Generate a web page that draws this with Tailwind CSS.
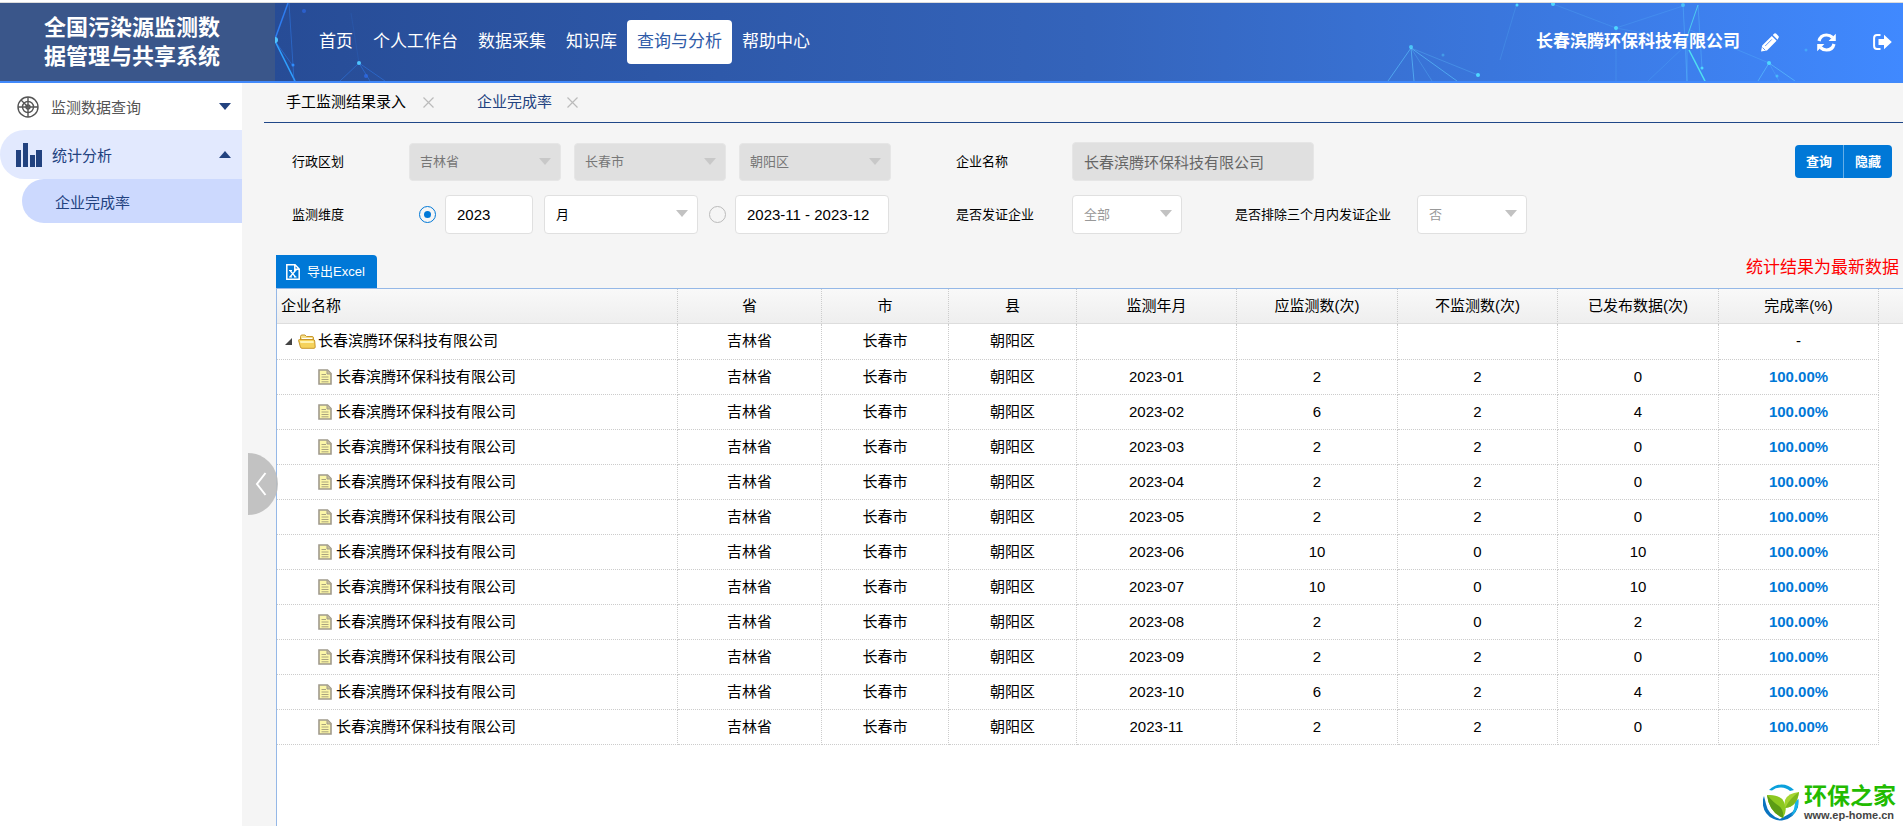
<!DOCTYPE html>
<html lang="zh-CN">

<head>
    <meta charset="utf-8" />
    <meta content="width=device-width, initial-scale=1.0" name="viewport" />
    <title>全国污染源监测数据管理与共享系统</title>
    <script src="https://cdn.jsdelivr.net/npm/@tailwindcss/browser@4"></script>
    <style>
        body {
            font-family: "Liberation Sans", "Noto Sans CJK SC", sans-serif;
        }
    </style>
</head>

<body class="bg-white text-black text-[15px]">
    <div class="relative min-h-screen flex flex-col overflow-hidden">
        <!-- Header -->
        <header class="mt-[2px] border-t border-t-[#dcdcdc] border-b-2 border-b-[#4189fb] flex h-[81px] shrink-0 text-white">
            <h1 class="w-[275px] shrink-0 bg-[#3a568a] px-[44px] pt-[10px] text-[22px] leading-[29px] font-bold">
                全国污染源监测数据管理与共享系统
            </h1>
            <div class="relative flex-1 flex items-center bg-linear-to-r from-[#274c96] via-[#3464bb] to-[#4089ff]">
                <svg class="absolute left-0 top-0" width="130" height="78" viewBox="0 0 130 78" fill="none">
                    <g stroke="#2f7df0">
                        <path d="M13 0L0 36" stroke-width="1.5" />
                        <path d="M0 38L20 78" stroke="#2fa0ff" stroke-width="1.5" />
                        <path d="M14 0L19 78M0 38L18 63" opacity=".5" />
                        <path d="M84 60L65 78M84 60L110 78M84 60L95 78" opacity=".5" />
                        <path d="M84 60L76 10" opacity=".15" />
                    </g>
                    <circle cx="0" cy="37" r="3" fill="#4fc4ff" />
                    <circle cx="84" cy="60" r="2" fill="#4fc4ff" />
                    <circle cx="18" cy="62" r="1.5" fill="#2f8dff" />
                    <circle cx="29" cy="8" r="2" fill="#2f6df0" opacity=".6" />
                    <circle cx="91" cy="73" r="2" fill="#2f6df0" opacity=".7" />
                </svg>
                <svg class="absolute right-0 top-0" width="523" height="78" viewBox="1380 3 523 78" fill="none">
                    <g stroke="#5fc8ff">
                        <path d="M1411 48L1388 81M1411 48L1414 81M1411 48L1457 81" opacity=".6" />
                        <path d="M1411 48L1432 81M1411 48L1478 75" opacity=".3" />
                        <path d="M1616 28L1553 4M1616 28L1683 6M1616 28V81M1616 28L1690 42M1686 45L1648 81M1517 3L1500 60" opacity=".2" />
                        <path d="M1698 5L1686 40" stroke="#4fe0f0" opacity=".8" />
                        <path d="M1698 5L1702 68M1687 40V81M1683 4L1687 81" opacity=".35" />
                        <path d="M1689 50L1705 81" stroke="#4fe0f0" stroke-width="1.5" />
                        <path d="M1769 63L1758 81M1769 63L1795 81" opacity=".6" />
                        <path d="M1769 63L1779 81M1769 63L1690 30" opacity=".25" />
                    </g>
                    <g fill="#4fd8ff">
                        <circle cx="1411" cy="47" r="2" opacity=".8" />
                        <circle cx="1478" cy="75" r="2" />
                        <circle cx="1616" cy="28" r="2" />
                        <circle cx="1553" cy="4" r="2" />
                        <circle cx="1517" cy="5" r="1.5" />
                        <circle cx="1683" cy="5" r="2" opacity=".7" />
                        <circle cx="1702" cy="68" r="1.5" />
                        <circle cx="1769" cy="63" r="2" />
                        <circle cx="1777" cy="76" r="1.5" opacity=".6" />
                        <circle cx="1806" cy="50" r="1.5" opacity=".4" />
                        <circle cx="1443" cy="55" r="1.5" opacity=".4" />
                    </g>
                </svg>
                <nav class="relative ml-[34px] flex text-[17px]">
                    <a class="px-[10px] leading-[44px]" href="#">首页</a>
                    <a class="px-[10px] leading-[44px]" href="#">个人工作台</a>
                    <a class="px-[10px] leading-[44px]" href="#">数据采集</a>
                    <a class="px-[10px] leading-[44px]" href="#">知识库</a>
                    <a class="px-[10px] leading-[44px] bg-white text-[#2f5ba8] rounded" href="#">查询与分析</a>
                    <a class="px-[10px] leading-[44px]" href="#">帮助中心</a>
                </nav>
                <div class="relative ml-auto mr-[11px] flex items-center">
                    <span class="text-[17px] font-bold mr-[21px]">长春滨腾环保科技有限公司</span>
                    <button type="button" aria-label="编辑" class="mr-[38px]">
                        <svg class="block" width="18" height="19" viewBox="0 0 18 19" fill="#fff">
                            <path d="M0 18.500L1.200 12.600L10.800 3L15.600 7.800L6 17.400ZM11.800 2L13.300.6Q14.300-.2 15.300.7L17.400 2.900Q18.300 4 17.400 5L16.600 6.800Z" />
                            <path d="M4.200 13L10.800 6.400M1.500 14.500L4.200 17.200" stroke="#3d7ff4" stroke-width=".8" />
                        </svg>
                    </button>
                    <button type="button" aria-label="刷新" class="mr-[37px]">
                        <svg class="block" width="19" height="19" viewBox="0 0 19 19" fill="none">
                            <path d="M2 8Q3.500 2 9.500 2Q13 2 15.500 4.500M17 11Q15.500 17 9.500 17Q6 17 3.500 14.500" stroke="#fff" stroke-width="3.200" />
                            <path d="M18.800.8V8H11.600ZM.2 18.200V11H7.400Z" fill="#fff" />
                        </svg>
                    </button>
                    <button type="button" aria-label="退出">
                        <svg class="block" width="19" height="16" viewBox="0 0 19 16" fill="none">
                            <path d="M7.500 1.100H4Q1.100 1.100 1.100 4V12Q1.100 14.900 4 14.900H7.500" stroke="#fff" stroke-width="2" />
                            <path d="M5.500 5H11V.8L18.800 8L11 15.200V11H5.500Z" fill="#fff" />
                        </svg>
                    </button>
                </div>
            </div>
        </header>

        <div class="flex-1 flex">
            <!-- Sidebar -->
            <aside class="w-[242px] shrink-0 bg-white text-[#555]">
                <a class="flex items-center h-[47px] pl-[17px] pr-[11px]" href="#">
                    <svg width="22" height="22" viewBox="0 0 22 22" fill="none" stroke="#555" stroke-width="1.400">
                        <circle cx="11" cy="11" r="10" />
                        <circle cx="11" cy="11" r="5.500" />
                        <circle cx="11" cy="11" r="2" />
                        <path d="M11 1V21M1 11H21M4 4L11 11" />
                    </svg>
                    <span class="ml-3 pt-1">监测数据查询</span>
                    <svg class="ml-auto" width="12" height="7" viewBox="0 0 12 7" fill="#22427f">
                        <path d="M0 0H12L6 7Z" />
                    </svg>
                </a>
                <a class="flex items-center h-[49px] pl-4 pr-[11px] rounded-l-full bg-[#e2e9fe] text-[#22427f]" href="#">
                    <svg width="26" height="24" viewBox="0 0 26 24" fill="#22427f">
                        <path d="M0 7H5V24H0ZM7 0H12V24H7ZM14 12H19V24H14ZM20 7H26V24H20Z" />
                    </svg>
                    <span class="ml-[10px] pt-1">统计分析</span>
                    <svg class="ml-auto" width="12" height="7" viewBox="0 0 12 7" fill="#22427f">
                        <path d="M0 7H12L6 0Z" />
                    </svg>
                </a>
                <a class="flex items-center h-[44px] ml-[22px] pl-[33px] pt-1 rounded-l-full bg-[#ccd9fe] text-[#22427f]" href="#">
                    企业完成率
                </a>
            </aside>

            <!-- Main Content -->
            <main class="relative flex-1 min-w-0 flex flex-col bg-[#f5f5f5]">
                <div class="ml-[22px] pl-[22px] h-[40px] flex items-center border-b border-[#1f4788]">
                    <a href="#">手工监测结果录入</a>
                    <button type="button" aria-label="关闭" class="ml-[17px]">
                        <svg class="block" width="11" height="11" viewBox="0 0 11 11" stroke="#bbb" stroke-width="1.200">
                            <path d="M.5.5L10.500 10.500M10.500.5L.5 10.500" />
                        </svg>
                    </button>
                    <a class="ml-[43px] text-[#22427f]" href="#">企业完成率</a>
                    <button type="button" aria-label="关闭" class="ml-[15px]">
                        <svg class="block" width="11" height="11" viewBox="0 0 11 11" stroke="#bbb" stroke-width="1.200">
                            <path d="M.5.5L10.500 10.500M10.500.5L.5 10.500" />
                        </svg>
                    </button>
                </div>

                <!-- Filters -->
                <form class="pt-[19px] pl-[50px] pr-[11px] flex flex-col gap-[14px] text-[13px]">
                    <div class="flex items-center h-[39px]">
                        <div class="w-[664px] flex items-center gap-[13px]">
                            <label class="w-[104px]" for="province">行政区划</label>
                            <div class="relative w-[152px]">
                                <select id="province" disabled class="appearance-none w-full h-[38px] pl-[10px] rounded border border-[#e6e6e6] bg-[#e0e0e0] text-[#777] opacity-100">
                                    <option>吉林省</option>
                                </select>
                                <svg class="absolute right-[10px] top-[15px]" width="12" height="7" viewBox="0 0 12 7" fill="#c8c8c8"><path d="M0 0H12L6 7Z" /></svg>
                            </div>
                            <div class="relative w-[152px]">
                                <select aria-label="市" disabled class="appearance-none w-full h-[38px] pl-[10px] rounded border border-[#e6e6e6] bg-[#e0e0e0] text-[#777] opacity-100">
                                    <option>长春市</option>
                                </select>
                                <svg class="absolute right-[10px] top-[15px]" width="12" height="7" viewBox="0 0 12 7" fill="#c8c8c8"><path d="M0 0H12L6 7Z" /></svg>
                            </div>
                            <div class="relative w-[152px]">
                                <select aria-label="县" disabled class="appearance-none w-full h-[38px] pl-[10px] rounded border border-[#e6e6e6] bg-[#e0e0e0] text-[#777] opacity-100">
                                    <option>朝阳区</option>
                                </select>
                                <svg class="absolute right-[10px] top-[15px]" width="12" height="7" viewBox="0 0 12 7" fill="#c8c8c8"><path d="M0 0H12L6 7Z" /></svg>
                            </div>
                        </div>
                        <label class="w-[116px]" for="company">企业名称</label>
                        <input id="company" type="text" disabled value="长春滨腾环保科技有限公司" class="w-[242px] h-[39px] pl-[11px] rounded border border-[#e6e6e6] bg-[#e0e0e0] text-[#666] text-[15px]" />
                        <div class="ml-auto flex text-white font-bold">
                            <button type="button" class="w-[49px] h-[33px] bg-[#0078d7] border-r border-[#66aee7] rounded-l-sm">查询</button>
                            <button type="button" class="w-[48px] h-[33px] bg-[#0078d7] rounded-r-sm">隐藏</button>
                        </div>
                    </div>
                    <div class="flex items-center h-[39px]">
                        <div class="w-[664px] flex items-center">
                            <span class="w-[127px]">监测维度</span>
                            <input type="radio" name="dimension" checked aria-label="按年" class="appearance-none w-[17px] h-[17px] rounded-full border border-[#0078d7] bg-white bg-clip-content checked:bg-[#0078d7] p-1" />
                            <input type="text" aria-label="年份" value="2023" class="ml-[9px] w-[88px] h-[39px] pl-[11px] rounded border border-[#e0e0e0] bg-white text-[15px]" />
                            <div class="relative ml-[11px] w-[154px]">
                                <select aria-label="周期" class="appearance-none w-full h-[39px] pl-[11px] rounded border border-[#e0e0e0] bg-white">
                                    <option>月</option>
                                </select>
                                <svg class="absolute right-[10px] top-[15px]" width="12" height="7" viewBox="0 0 12 7" fill="#c2c2c2"><path d="M0 0H12L6 7Z" /></svg>
                            </div>
                            <input type="radio" name="dimension" aria-label="按时间段" class="ml-[11px] appearance-none w-[17px] h-[17px] rounded-full border border-[#bbb] bg-[#f5f5f5]" />
                            <input type="text" aria-label="时间段" value="2023-11 - 2023-12" class="ml-[9px] w-[154px] h-[39px] pl-[11px] rounded border border-[#e0e0e0] bg-white text-[15px]" />
                        </div>
                        <label class="w-[116px]" for="licensed">是否发证企业</label>
                        <div class="relative w-[110px]">
                            <select id="licensed" class="appearance-none w-full h-[39px] pl-[11px] rounded border border-[#e0e0e0] bg-white text-[#999]">
                                <option>全部</option>
                            </select>
                            <svg class="absolute right-[10px] top-[15px]" width="12" height="7" viewBox="0 0 12 7" fill="#c2c2c2"><path d="M0 0H12L6 7Z" /></svg>
                        </div>
                        <label class="ml-[53px] w-[182px]" for="exclude">是否排除三个月内发证企业</label>
                        <div class="relative w-[110px]">
                            <select id="exclude" class="appearance-none w-full h-[39px] pl-[11px] rounded border border-[#e0e0e0] bg-white text-[#999]">
                                <option>否</option>
                            </select>
                            <svg class="absolute right-[10px] top-[15px]" width="12" height="7" viewBox="0 0 12 7" fill="#c2c2c2"><path d="M0 0H12L6 7Z" /></svg>
                        </div>
                    </div>
                </form>

                <!-- Toolbar -->
                <div class="mt-[21px] ml-[34px] flex items-start justify-between">
                    <button type="button" class="flex items-center h-[33px] w-[101px] pl-[10px] gap-[7px] bg-[#0078d7] rounded-tr-sm text-white text-[13px]">
                        <svg width="14" height="16" viewBox="0 0 14 16" fill="none" stroke="#fff" stroke-width="1.500">
                            <path d="M.8.8H9L13.200 5V15.200H.8ZM8.800.8V5.200H13.200" />
                            <path d="M4 6.500L9.500 13M9.500 6.500L4 13M3 6.500H6M8 6.500H10.500M3 13H6M8 13H10.500" stroke-width="1.200" />
                        </svg>
                        <span>导出Excel</span>
                    </button>
                    <p class="w-[157px] whitespace-nowrap text-[17px] leading-[26px] text-[#f00]">统计结果为最新数据</p>
                </div>

                <!-- Table -->
                <div class="flex-1 ml-[34px] bg-white border-l border-t border-[#95b8e7]">
                    <table class="w-full table-fixed border-separate border-spacing-0 text-center">
                        <colgroup>
                            <col />
                            <col class="w-[144px]" />
                            <col class="w-[127px]" />
                            <col class="w-[128px]" />
                            <col class="w-[160px]" />
                            <col class="w-[161px]" />
                            <col class="w-[160px]" />
                            <col class="w-[161px]" />
                            <col class="w-[160px]" />
                            <col class="w-[24px]" />
                        </colgroup>
                        <thead>
                            <tr class="h-[35px] bg-linear-to-b from-[#f9f9f9] to-[#eeeeee]">
                                <th class="pl-1 text-left font-normal border-b border-b-[#ddd] border-r border-r-[#ccc] [border-right-style:dotted]">企业名称</th>
                                <th class="font-normal border-b border-b-[#ddd] border-r border-r-[#ccc] [border-right-style:dotted]">省</th>
                                <th class="font-normal border-b border-b-[#ddd] border-r border-r-[#ccc] [border-right-style:dotted]">市</th>
                                <th class="font-normal border-b border-b-[#ddd] border-r border-r-[#ccc] [border-right-style:dotted]">县</th>
                                <th class="font-normal border-b border-b-[#ddd] border-r border-r-[#ccc] [border-right-style:dotted]">监测年月</th>
                                <th class="font-normal border-b border-b-[#ddd] border-r border-r-[#ccc] [border-right-style:dotted]">应监测数(次)</th>
                                <th class="font-normal border-b border-b-[#ddd] border-r border-r-[#ccc] [border-right-style:dotted]">不监测数(次)</th>
                                <th class="font-normal border-b border-b-[#ddd] border-r border-r-[#ccc] [border-right-style:dotted]">已发布数据(次)</th>
                                <th class="font-normal border-b border-b-[#ddd] border-r border-r-[#ccc] [border-right-style:dotted]">完成率(%)</th>
                                <td class="border-b border-b-[#ddd]"></td>
                            </tr>
                        </thead>
                        <tbody id="rateTableBody">
                            <tr class="h-[36px]">
                                <td class="border-r border-b border-dotted border-[#ccc]">
                                    <div class="flex items-center pl-2">
                                        <svg width="7" height="7" viewBox="0 0 7 7" fill="#444"><path d="M7 0V7H0Z" /></svg>
                                        <svg class="ml-[6px]" width="18" height="15" viewBox="0 0 18 15">
                                            <path d="M2.500 11V2.500Q2.500 1 4 1H7L8.500 2.500H14Q15.500 2.500 15.500 4V7" fill="#f7e08a" stroke="#c9972b" />
                                            <path d="M4 4H14V6H4Z" fill="#fff" />
                                            <path d="M.6 6.500Q.5 5.500 1.500 5.500H15Q16.500 5.500 16.700 7L17.200 13Q17.200 14.300 16 14.300H4Q2.800 14.300 2.400 13Z" fill="#f5d25a" stroke="#c9972b" />
                                            <path d="M2 7H15.500L15.700 9H2.500Z" fill="#fff3b0" />
                                        </svg>
                                        <span class="ml-[2px]">长春滨腾环保科技有限公司</span>
                                    </div>
                                </td>
                                <td class="border-r border-b border-dotted border-[#ccc]">吉林省</td>
                                <td class="border-r border-b border-dotted border-[#ccc]">长春市</td>
                                <td class="border-r border-b border-dotted border-[#ccc]">朝阳区</td>
                                <td class="border-r border-b border-dotted border-[#ccc]"></td>
                                <td class="border-r border-b border-dotted border-[#ccc]"></td>
                                <td class="border-r border-b border-dotted border-[#ccc]"></td>
                                <td class="border-r border-b border-dotted border-[#ccc]"></td>
                                <td class="border-r border-b border-dotted border-[#ccc]">-</td>
                                <td></td>
                            </tr>
                            <!-- 月度数据由脚本插入 -->
                        </tbody>
                    </table>
                </div>

                <!-- 收起侧边栏 -->
                <button type="button" aria-label="收起" class="absolute left-[6px] top-[370px] w-[30px] h-[62px]">
                    <svg class="block" width="30" height="62" viewBox="0 0 30 62" fill="none">
                        <path d="M0 0A30 31 0 0 1 0 62Z" fill="#bbb" fill-opacity=".88" />
                        <path d="M17.500 20L9 31L17.500 42" stroke="#fff" stroke-width="2" />
                    </svg>
                </button>
            </main>
        </div>

        <!-- Logo -->
        <a class="absolute right-[7px] bottom-[4px] flex items-center gap-[5px]" href="#">
            <svg width="36" height="37" viewBox="0 0 36 37" fill="none">
                <path d="M6 6A17 17 0 0 1 31 6L27 7A14 14 0 0 0 9 6.500Z" fill="#0aa0dc" />
                <path d="M1 12A18 18 0 0 0 19 36.500Q31 35 35 23L35.500 15Q34 26 26 30L17 35Q5 31 3 20Z" fill="#0a74c0" />
                <path d="M35.500 15Q36 27 28 32Q32 25 32 17Z" fill="#18b4e8" />
                <path d="M4 11Q17 10 21 18Q25 26 20 34Q6 28 4 11Z" fill="#8cc820" />
                <path d="M4 11Q11 19 16 22Q21 26 20 34Q6 28 4 11Z" fill="#5c9c14" />
                <path d="M36 8Q25 9 22 16Q21 20 22 24Q34 23 36 8Z" fill="#a4d430" />
                <path d="M36 8Q27 14 22 24Q34 23 36 8Z" fill="#7cb81c" />
            </svg>
            <span class="flex flex-col">
                <span class="text-[23px] leading-[26px] font-bold text-[#22bb00]">环保之家</span>
                <span class="text-[11px] leading-[13px] font-bold text-[#444]">www.ep-home.cn</span>
            </span>
        </a>
    </div>

    <script>
        // [监测年月, 应监测数, 不监测数, 已发布数据]
        const monthlyData = [
            ['2023-01', 2, 2, 0],
            ['2023-02', 6, 2, 4],
            ['2023-03', 2, 2, 0],
            ['2023-04', 2, 2, 0],
            ['2023-05', 2, 2, 0],
            ['2023-06', 10, 0, 10],
            ['2023-07', 10, 0, 10],
            ['2023-08', 2, 0, 2],
            ['2023-09', 2, 2, 0],
            ['2023-10', 6, 2, 4],
            ['2023-11', 2, 2, 0]
        ];

        const tableBody = document.getElementById('rateTableBody');

        monthlyData.forEach(([month, total, excluded, published]) => {
            const row = document.createElement('tr');
            row.className = 'h-[35px]';
            row.innerHTML = `
                <td class="border-r border-b border-dotted border-[#ccc]">
                    <div class="flex items-center pl-[41px]">
                        <svg width="14" height="16" viewBox="0 0 14 16">
                            <path d="M1 1H9.500L13 4.500V15H1Z" fill="#fbf6a8" stroke="#a09a8c" stroke-width="1.600" />
                            <path d="M9 1V5H13" fill="#c8c09a" stroke="#a09a8c" />
                            <path d="M3.500 5.500H8M3.500 8H10.500M3.500 10.500H10.500M3.500 12.800H10.500" stroke="#aaa47e" />
                        </svg>
                        <span class="ml-1">长春滨腾环保科技有限公司</span>
                    </div>
                </td>
                <td class="border-r border-b border-dotted border-[#ccc]">吉林省</td>
                <td class="border-r border-b border-dotted border-[#ccc]">长春市</td>
                <td class="border-r border-b border-dotted border-[#ccc]">朝阳区</td>
                <td class="border-r border-b border-dotted border-[#ccc]">${month}</td>
                <td class="border-r border-b border-dotted border-[#ccc]">${total}</td>
                <td class="border-r border-b border-dotted border-[#ccc]">${excluded}</td>
                <td class="border-r border-b border-dotted border-[#ccc]">${published}</td>
                <td class="border-r border-b border-dotted border-[#ccc] font-bold text-[#0078d7]">100.00%</td>
                <td></td>
            `;
            tableBody.appendChild(row);
        });
    </script>
</body>

</html>
